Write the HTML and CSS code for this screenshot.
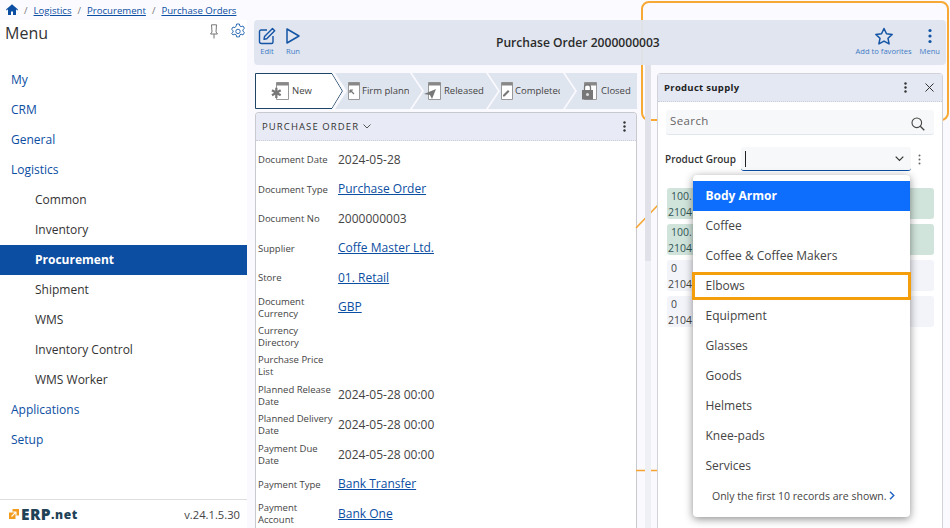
FILE: index.html
```html
<!DOCTYPE html>
<html lang="en">
<head>
<meta charset="utf-8">
<title>Purchase Order</title>
<link rel="stylesheet" href="styles.css">
</head>
<body>
<nav class="crumbs">
  <svg class="home" viewBox="0 0 12 11" width="12" height="11"><path d="M6 .3 0 5.6l.7.8L2 5.300V11h3V7.500h2V11h3V5.300l1.300 1.100.7-.8z" fill="#0b4ea2"/></svg>
  <span class="sep">/</span><a>Logistics</a><span class="sep">/</span><a>Procurement</a><span class="sep">/</span><a>Purchase Orders</a>
</nav>
<div class="app">
  <aside class="side">
    <header class="side-head">
      <h2>Menu</h2>
      <svg class="pin" viewBox="0 0 10 15" width="10" height="15"><path d="M2.500 .8h5L7 8l1.500 2h-7L3 8zM5 10v4.500" fill="none" stroke="#777" stroke-width="1" stroke-linejoin="round"/></svg>
      <svg class="gear" viewBox="0 0 16 16" width="16" height="16"><path d="M6.600 1h2.800l.4 2 1.300.7 1.900-.7 1.400 2.400-1.500 1.300v1.500l1.500 1.300-1.400 2.400-1.900-.7-1.300.7-.4 2H6.600l-.4-2-1.300-.7-1.900.7L1.600 10.500l1.500-1.300V7.700L1.600 6.400 3 4l1.900.7L6.200 3z" fill="none" stroke="#2f6db5" stroke-width="1" stroke-linejoin="round"/><circle cx="8" cy="8.400" r="2.200" fill="none" stroke="#2f6db5"/></svg>
    </header>
    <ul class="tree">
      <li>My</li><li>CRM</li><li>General</li><li>Logistics</li>
      <li class="sub">Common</li><li class="sub">Inventory</li>
      <li class="sub active">Procurement</li>
      <li class="sub">Shipment</li><li class="sub">WMS</li><li class="sub">Inventory Control</li><li class="sub">WMS Worker</li>
      <li>Applications</li><li>Setup</li>
    </ul>
    <footer class="side-foot">
      <span class="logo">
        <svg viewBox="0 0 10 10" width="10" height="10"><path d="M0 3.500h3.500V0H10v6.500H6.500V10H0z" fill="#f29b1d"/><path d="M2.500 7.500l4-4M3.500 3h3.500v3.500" fill="none" stroke="#fff" stroke-width="1.100"/></svg>
        <b>ERP</b><i>.net</i>
      </span>
      <span class="ver">v.24.1.5.30</span>
    </footer>
  </aside>
  <main class="main">
    <section class="toolbar">
      <div class="tools tools-left">
        <div class="tool"><svg viewBox="0 0 18 18" width="18" height="18"><path d="M9 3H3a1.500 1.500 0 0 0-1.500 1.500v10A2 2 0 0 0 3.500 16.500h10a1.500 1.500 0 0 0 1.500-1.500V9" fill="none" stroke="#0b4ea2" stroke-width="1.400"/><path d="M6.500 9.500 14.500 1.500l2.200 2.200-8 8-2.700.6z" fill="none" stroke="#0b4ea2" stroke-width="1.400" stroke-linejoin="round"/></svg><span>Edit</span></div>
        <div class="tool"><svg viewBox="0 0 16 18" width="16" height="18"><path d="M2 2v14l12-7z" fill="none" stroke="#0b4ea2" stroke-width="1.500" stroke-linejoin="round"/></svg><span>Run</span></div>
      </div>
      <h1>Purchase Order 2000000003</h1>
      <div class="tools tools-right">
        <div class="tool"><svg viewBox="0 0 20 18" width="20" height="18"><path d="M10 1.500l2.500 5.200 5.700.7-4.200 3.900 1.100 5.600L10 14.100l-5.100 2.800L6 11.300 1.800 7.400l5.700-.7z" fill="none" stroke="#0b4ea2" stroke-width="1.500" stroke-linejoin="round"/></svg><span>Add to favorites</span></div>
        <div class="tool"><svg viewBox="0 0 4 16" width="4" height="16"><circle cx="2" cy="2.500" r="1.600" fill="#0b4ea2"/><circle cx="2" cy="8" r="1.600" fill="#0b4ea2"/><circle cx="2" cy="13.500" r="1.600" fill="#0b4ea2"/></svg><span>Menu</span></div>
      </div>
    </section>
    <div class="work">
      <div class="left">
        <div class="steps">
          <div class="step first">
            <svg class="doc" viewBox="0 0 18 18" width="18" height="18"><path d="M5.500 .5h12v17h-12z" fill="#fff" stroke="#999"/><path d="M5.500 .5h12v3h-12z" fill="#888"/><path d="M6 7v3.200L3.200 8.600 2 10.700 4.800 12.300 2 14l1.200 2 2.800-1.600V18h2.400v-3.600l2.800 1.600 1.200-2-2.800-1.700 2.800-1.600-1.200-2.100-2.800 1.600V7z" fill="#777" transform="translate(-1.500 -1) scale(.95)"/></svg>
            <span>New</span>
            <svg class="step-outline" viewBox="0 0 88 36" width="88" height="36"><path d="M.5.500H77L87.500 18 77 35.500H.5z" fill="none" stroke="#1f4566"/></svg>
          </div>
          <div class="step two"><svg class="doc" viewBox="0 0 12 18" width="12" height="18"><path d="M.5.500h11v17H.5z" fill="#fff" stroke="#999"/><path d="M.5.500h11v3H.5z" fill="#888"/><path d="M2 8l4 4M2 8h3M2 8v3" fill="none" stroke="#777" stroke-width="1.200"/></svg><span class="clip cl-firm">Firm planned</span></div>
          <div class="step three"><svg class="doc" viewBox="0 0 18 18" width="18" height="18"><path d="M5.500 .5h12v17h-12z" fill="#fff" stroke="#999"/><path d="M5.500 .5h12v3h-12z" fill="#888"/><path d="M1 12l12-5-4 10-2-4z" fill="#777"/></svg><span>Released</span></div>
          <div class="step four"><svg class="doc" viewBox="0 0 12 18" width="12" height="18"><path d="M.5.500h11v17H.5z" fill="#fff" stroke="#999"/><path d="M.5.500h11v3H.5z" fill="#888"/><path d="M2 13l5-5 1.500 1.500-5 5H2z" fill="#777"/></svg><span class="clip cl-comp">Completed</span></div>
          <div class="step five"><svg class="doc" viewBox="0 0 16 18" width="16" height="18"><path d="M3.500 .5h12v17h-12z" fill="#fff" stroke="#999"/><path d="M3.500 .5h12v3h-12z" fill="#888"/><path d="M1 8h11v9.500H1z" fill="#777"/><path d="M3.500 8V5.500a3 3 0 0 1 6 0V8" fill="none" stroke="#777" stroke-width="1.300"/><circle cx="6.500" cy="12.500" r="1.500" fill="#ddd"/></svg><span>Closed</span></div>
        </div>
        <section class="card">
          <header class="card-head">
            <span class="card-title">PURCHASE ORDER</span>
            <svg class="caret" viewBox="0 0 8 5" width="8" height="5"><path d="M.5.500 4 4 7.500.500" fill="none" stroke="#555"/></svg>
            <svg class="kebab" viewBox="0 0 3 11" width="3" height="11"><circle cx="1.500" cy="1.500" r="1.200" fill="#333"/><circle cx="1.500" cy="5.500" r="1.200" fill="#333"/><circle cx="1.500" cy="9.500" r="1.200" fill="#333"/></svg>
          </header>
          <dl class="form">
            <div class="row r30"><dt>Document Date</dt><dd>2024-05-28</dd></div>
            <div class="row r29"><dt>Document Type</dt><dd><a>Purchase Order</a></dd></div>
            <div class="row r30"><dt>Document No</dt><dd>2000000003</dd></div>
            <div class="row r29"><dt>Supplier</dt><dd><a>Coffe Master Ltd.</a></dd></div>
            <div class="row r30"><dt>Store</dt><dd><a>01. Retail</a></dd></div>
            <div class="row r29"><dt>Document Currency</dt><dd><a>GBP</a></dd></div>
            <div class="row r29"><dt>Currency Directory</dt><dd></dd></div>
            <div class="row r30"><dt>Purchase Price List</dt><dd></dd></div>
            <div class="row r29"><dt>Planned Release Date</dt><dd>2024-05-28 00:00</dd></div>
            <div class="row r30"><dt>Planned Delivery Date</dt><dd>2024-05-28 00:00</dd></div>
            <div class="row r30"><dt>Payment Due Date</dt><dd>2024-05-28 00:00</dd></div>
            <div class="row r29"><dt>Payment Type</dt><dd><a>Bank Transfer</a></dd></div>
            <div class="row r30"><dt>Payment Account</dt><dd><a>Bank One</a></dd></div>
          </dl>
        </section>
      </div>
      <div class="gutter"><div class="thumb"></div></div>
      <section class="panel">
        <header class="panel-head">
          <span class="panel-title">Product supply</span>
          <svg class="kebab pk" viewBox="0 0 3 11" width="3" height="11"><circle cx="1.500" cy="1.500" r="1.200" fill="#333"/><circle cx="1.500" cy="5.500" r="1.200" fill="#333"/><circle cx="1.500" cy="9.500" r="1.200" fill="#333"/></svg>
          <svg class="close" viewBox="0 0 9 9" width="9" height="9"><path d="M.5.500l8 8M8.500.500l-8 8" stroke="#333" stroke-width="1"/></svg>
        </header>
        <div class="panel-body">
          <div class="search"><span>Search</span><svg viewBox="0 0 14 14" width="14" height="14"><circle cx="5.800" cy="5.800" r="4.800" fill="none" stroke="#444" stroke-width="1.100"/><path d="M9.300 9.300l4 4" stroke="#444" stroke-width="1.300"/></svg></div>
          <div class="group">
            <label>Product Group</label>
            <div class="combo"><i class="cursor"></i><svg viewBox="0 0 9 6" width="9" height="6"><path d="M.7.700 4.500 4.500 8.300.700" fill="none" stroke="#333" stroke-width="1.200"/></svg></div>
            <svg class="kebab gk" viewBox="0 0 3 11" width="3" height="11"><circle cx="1.500" cy="1.500" r="1" fill="#666"/><circle cx="1.500" cy="5.500" r="1" fill="#666"/><circle cx="1.500" cy="9.500" r="1" fill="#666"/></svg>
          </div>
          <div class="results">
            <div class="res green"><span>100.</span><span>2104</span></div>
            <div class="res green"><span>100.</span><span>2104</span></div>
            <div class="res"><span>0</span><span>2104</span></div>
            <div class="res"><span>0</span><span>2104</span></div>
          </div>
        </div>
      </section>
    </div>
  </main>
</div>
<svg class="annot" viewBox="0 0 950 528" width="950" height="528"><path d="M658 205 636 228M636 470.500h22" fill="none" stroke="#f7a531" stroke-width="1.600"/></svg>
<div class="callout"></div>
<ul class="menu">
  <li class="sel">Body Armor</li><li>Coffee</li><li>Coffee &amp; Coffee Makers</li><li class="focus">Elbows</li><li>Equipment</li><li>Glasses</li><li>Goods</li><li>Helmets</li><li>Knee-pads</li><li>Services</li>
  <li class="more">Only the first 10 records are shown. <svg viewBox="0 0 6 9" width="6" height="9"><path d="M1 .7 4.800 4.500 1 8.300" fill="none" stroke="#1f62c4" stroke-width="1.400"/></svg></li>
</ul>
</body>
</html>
```
FILE: styles.css
```css
* { box-sizing: border-box; }
html, body { margin: 0; height: 100%; }
body { width: 950px; height: 528px; overflow: hidden; position: relative; display: flex; flex-direction: column; background: #f9f9fe; font-family: "Open Sans", sans-serif; color: #333; }
a { color: #0b4ea2; text-decoration: underline; }
ul, dl, dd { margin: 0; padding: 0; list-style: none; }
h1, h2 { margin: 0; font-weight: 400; }

.crumbs { height: 20px; flex: none; display: flex; align-items: center; padding-left: 6px; font-size: 9.600px; background: #fafaff; }
.home { margin-top: -2px; }
.sep { color: #777; margin: 0 6px; }

.app { flex: 1; display: flex; min-height: 0; }
.side { width: 247px; flex: none; background: #fff; display: flex; flex-direction: column; }
.side-head { height: 30px; flex: none; display: flex; align-items: flex-start; padding: 2px 1px 0 5px; }
.side-head h2 { font-size: 16px; color: #333; line-height: 22px; flex: 1; }
.pin { margin: 2px 11px 0 0; }
.gear { margin: 1px 0 0 0; }
.tree { flex: 1; padding-top: 15px; font-size: 12px; color: #0b4ea2; }
.tree li { height: 30px; line-height: 30px; padding-left: 11px; }
.tree .sub { padding-left: 35px; color: #333; }
.tree .active { background: #0b4ea2; color: #fff; font-weight: 700; }
.side-foot { height: 29px; flex: none; display: flex; align-items: center; justify-content: space-between; border-top: 1px solid #dedede; padding: 0 7px 0 9px; }
.logo { display: flex; align-items: center; color: #1f4257; }
.logo svg { margin-right: 2px; }
.logo b { font-size: 15.500px; line-height: 16px; font-weight: 800; letter-spacing: .4px; }
.logo i { font-size: 12px; line-height: 16px; font-style: normal; font-weight: 800; margin-top: 2px; letter-spacing: .6px; }
.ver { font-size: 11.200px; color: #444; }

.main { flex: 1; min-width: 0; padding-left: 7px; padding-right: 4px; display: flex; flex-direction: column; }
.toolbar { height: 45px; flex: none; background: #dfe5ef; border-radius: 4px; display: flex; align-items: flex-start; justify-content: space-between; padding: 7px 6px 0 4px; position: relative; z-index: 3; opacity: .96; }
.toolbar h1 { font-size: 12.100px; font-weight: 600; color: #222; position: absolute; left: 242px; top: 14px; white-space: nowrap; }
.tools { display: flex; }
.tools-left { gap: 9px; }
.tools-right { gap: 8px; }
.tool { display: flex; flex-direction: column; align-items: center; gap: 1px; font-size: 7.600px; line-height: 10px; color: #3a76c4; }
.tool svg { height: 18px; }

.work { flex: 1; display: flex; min-height: 0; padding-top: 8px; }
.left { width: 383px; flex: none; display: flex; flex-direction: column; }
.steps { height: 36px; flex: none; display: flex; margin-left: 1px; position: relative; }
.step { height: 36px; display: flex; align-items: center; font-size: 9.500px; line-height: 12px; color: #444; position: relative; flex: none; background: #dfe5ef; clip-path: polygon(0 0, calc(100% - 12px) 0, 100% 50%, calc(100% - 12px) 100%, 0 100%, 12px 50%); }
.step span { margin-top: -1px; }
.step.first { width: 88px; padding-left: 16px; gap: 3px; margin-right: -8px; background: #fff; clip-path: polygon(0 0, 77px 0, 100% 50%, 77px 100%, 0 100%); z-index: 2; }
.step-outline { position: absolute; left: 0; top: 0; }
.doc { flex: none; }
.two { width: 87px; padding-left: 13px; gap: 2px; margin-right: -10px; }
.three { width: 86px; padding-left: 11px; gap: 3px; margin-right: -10px; }
.four { width: 87px; padding-left: 13px; gap: 2px; margin-right: -10px; }
.five { width: 72px; padding-left: 16px; gap: 4px; clip-path: polygon(0 0, 100% 0, 100% 100%, 0 100%, 12px 50%); }
.clip { overflow: hidden; white-space: nowrap; display: block; }
.cl-firm { width: 47px; }
.cl-comp { width: 45px; }

.card { flex: 1; margin: 3px 0 0 1px; background: #fff; border: 1px solid #c8c8cf; border-bottom: 0; border-radius: 4px 4px 0 0; min-height: 0; overflow: hidden; }
.card-head { height: 28px; background: #e8ebf5; border-bottom: 1px dotted #ccd; display: flex; align-items: center; padding: 0 10px 0 6px; font-size: 9.500px; letter-spacing: 1.100px; color: #333; }
.caret { margin-left: 4px; }
.kebab { margin-left: auto; flex: none; }
.form { padding-top: 3px; }
.row { display: flex; align-items: center; padding-left: 2px; }
.r30 { height: 30px; }
.r29 { height: 29px; }
dt { width: 75px; margin-right: 5px; padding-top: 2px; flex: none; font-size: 9.500px; line-height: 12px; color: #444; }
dd { font-size: 12px; color: #444; }

.gutter { width: 20px; flex: none; position: relative; z-index: 2; }
.thumb { position: absolute; left: 8px; top: -8px; width: 6px; height: 196px; background: #e1e1ea; }
.gutter::after { content: ""; position: absolute; left: 8px; top: 188px; bottom: 0; width: 6px; background: #efeff6; }

.panel { width: 286px; flex: none; position: relative; z-index: 2; background: #fff; border: 1px solid #d2d2da; border-bottom: 0; border-radius: 4px 4px 0 0; }
.panel-head { height: 28px; background: #e4e8f2; border-bottom: 1px dotted #ccd; display: flex; align-items: center; padding: 0 8px 0 6px; }
.panel-title { font-size: 9.500px; font-weight: 700; letter-spacing: .3px; color: #222; }
.pk { margin-right: 18px; }
.panel-body { padding: 8px 8px 0; }
.search { height: 25px; background: #f7f8f9; border-bottom: 1px solid #dfe5ef; border-radius: 3px; display: flex; align-items: center; justify-content: space-between; padding: 0 9px 0 4px; font-size: 11.500px; color: #666; letter-spacing: .4px; }
.search span { margin-top: -3px; }
.search svg { margin-top: 3px; }
.group { display: flex; align-items: center; margin-top: 12px; height: 24px; }
.group label { font-size: 10px; font-weight: 600; width: 75px; margin-left: -1px; margin-right: 1px; flex: none; color: #333; }
.combo { width: 170px; height: 24px; background: #f7f8f9; border-bottom: 1px solid #0b4ea2; border-radius: 3px; display: flex; align-items: center; justify-content: space-between; padding: 0 7px 0 4px; }
.cursor { width: 1px; height: 16px; background: #222; }
.gk { margin: 0 auto 0 7px; }
.results { margin-top: 17px; display: flex; flex-direction: column; gap: 5px; margin-left: 1px; margin-right: 0; }
.res { height: 31px; background: #f3f4fa; border-radius: 3px; display: flex; flex-direction: column; font-size: 10.500px; line-height: 16px; color: #444; padding-left: 1px; }
.res span:first-child { padding-left: 3px; }
.res.green { background: #d0e4db; color: #355; }

.annot { position: absolute; left: 0; top: 0; z-index: 1; pointer-events: none; }
.callout { position: absolute; left: 641px; top: 1px; width: 308px; height: 120px; border: 2px solid #f8a934; border-radius: 8px; z-index: 1; }
.menu { position: absolute; z-index: 5; left: 693px; top: 175px; width: 217px; height: 342px; background: #fff; border-radius: 4px; padding-top: 6px; box-shadow: 0 2px 8px rgba(0,0,0,.45); font-size: 12px; color: #444; }
.menu li { height: 30px; line-height: 30px; padding-left: 12.500px; }
.menu .sel { background: #0d6efd; color: #fff; font-weight: 700; }
.menu .focus { outline: 3px solid #f59e0b; outline-offset: -2px; height: 26px; line-height: 26px; margin: 2px 0; }
.menu .more { font-size: 10.500px; padding-left: 19px; color: #444; }
```
